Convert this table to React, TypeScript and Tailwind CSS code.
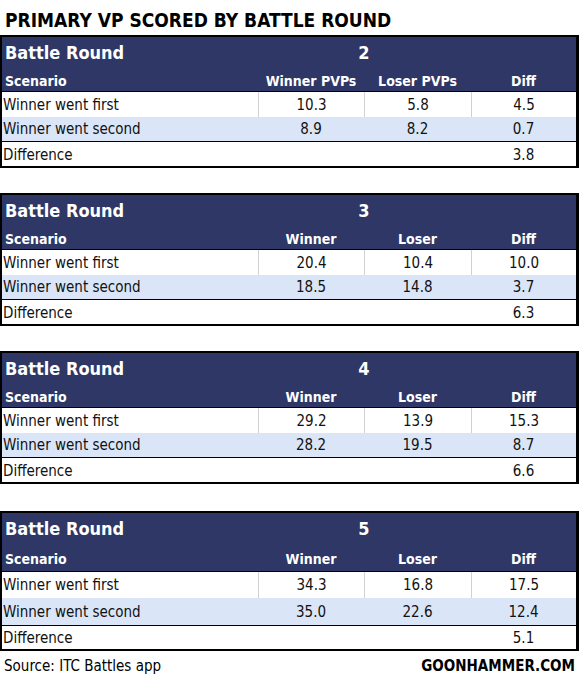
import React from "react";

interface RoundTable {
  round: string;
  cols: string[];
  rows: string[][];
  diff: string;
  tall?: boolean;
}

const tables: RoundTable[] = [
  {
    round: "2",
    cols: ["Winner PVPs", "Loser PVPs", "Diff"],
    rows: [
      ["Winner went first", "10.3", "5.8", "4.5"],
      ["Winner went second", "8.9", "8.2", "0.7"],
    ],
    diff: "3.8",
  },
  {
    round: "3",
    cols: ["Winner", "Loser", "Diff"],
    rows: [
      ["Winner went first", "20.4", "10.4", "10.0"],
      ["Winner went second", "18.5", "14.8", "3.7"],
    ],
    diff: "6.3",
  },
  {
    round: "4",
    cols: ["Winner", "Loser", "Diff"],
    rows: [
      ["Winner went first", "29.2", "13.9", "15.3"],
      ["Winner went second", "28.2", "19.5", "8.7"],
    ],
    diff: "6.6",
  },
  {
    round: "5",
    cols: ["Winner", "Loser", "Diff"],
    rows: [
      ["Winner went first", "34.3", "16.8", "17.5"],
      ["Winner went second", "35.0", "22.6", "12.4"],
    ],
    diff: "5.1",
    tall: true,
  },
];

const cond = "font-['DejaVu_Sans_Condensed','DejaVu_Sans',sans-serif]";
const grid = "grid grid-cols-[256px_106px_107px_1fr]";

const Table: React.FC<{ t: RoundTable }> = ({ t }) => {
  // row heights: first, second, difference (incl. its top rule)
  const heights = t.tall
    ? ["h-[26px]", "h-[27px]", "h-[24px]"]
    : ["h-[25px]", "h-[24px]", "h-[25px]"];
  return (
    <div className={`w-[579px] border-2 border-r-[3px] border-black ${cond}`}>
      <div className="bg-[#2e3766] text-white font-bold">
        <div className="grid grid-cols-[256px_212px_1fr] h-[30px] items-center">
          <span className="pl-[3px] text-[18px] leading-none pt-[2px]">
            Battle Round
          </span>
          <span className="text-center text-[18px] leading-none pt-[2px]">
            {t.round}
          </span>
        </div>
        <div
          className={`${grid} ${
            t.tall ? "h-[28px]" : "h-[24px]"
          } items-center text-[14px] leading-none pt-[3px]`}
        >
          <span className="pl-[3px]">Scenario</span>
          {t.cols.map((c) => (
            <span key={c} className="text-center">
              {c}
            </span>
          ))}
        </div>
      </div>
      <div className="border-t border-black text-[15px] leading-none text-[#111]">
        {t.rows.map((r, i) => (
          <div
            key={i}
            className={`${grid} ${heights[i]} ${
              i === 1 ? "bg-[#dae6f8]" : "bg-white"
            }`}
          >
            <span className="pl-[1px] flex items-center pt-[1px]">{r[0]}</span>
            {r.slice(1).map((v, j) => (
              <span
                key={j}
                className={`flex items-center justify-center pt-[1px] ${
                  i === 0 ? "border-l border-[#d2d2d2]" : ""
                }`}
              >
                {v}
              </span>
            ))}
          </div>
        ))}
        <div className={`${grid} ${heights[2]} border-t border-black`}>
          <span className="pl-[1px] flex items-center pt-[2px]">
            Difference
          </span>
          <span />
          <span />
          <span className="flex items-center justify-center pt-[2px]">
            {t.diff}
          </span>
        </div>
      </div>
    </div>
  );
};

export default function App() {
  return (
    <div className="w-[580px] h-[678px] bg-white overflow-hidden">
      <h1
        className={`${cond} font-bold text-[19px] leading-none text-black pl-[5px] pt-[11px] h-[35px]`}
      >
        PRIMARY VP SCORED BY BATTLE ROUND
      </h1>
      <div className="flex flex-col gap-[25px]">
        {tables.map((t) => (
          <div key={t.round} className={t.tall ? "mt-[2px]" : ""}>
            <Table t={t} />
          </div>
        ))}
      </div>
      <div
        className={`${cond} flex justify-between items-center pl-[4px] pr-[5px] pt-[8px] text-[15px] leading-none text-black`}
      >
        <span>Source: ITC Battles app</span>
        <span className="font-bold">GOONHAMMER.COM</span>
      </div>
    </div>
  );
}
